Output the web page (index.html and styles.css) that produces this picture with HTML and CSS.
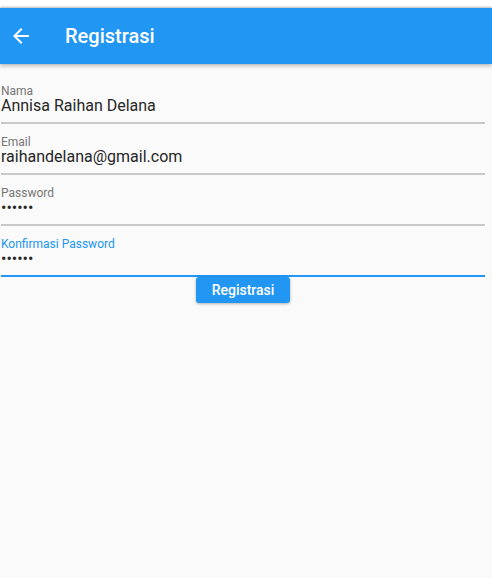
FILE: index.html
```html
<!DOCTYPE html>
<html>
<head>
<meta charset="utf-8">
<link rel="stylesheet" href="styles.css">
</head>
<body>
<div class="status"></div>
<header class="appbar">
  <svg class="back" viewBox="0 0 24 24" width="24" height="24"><path d="M20 11H7.83l5.59-5.59L12 4l-8 8 8 8 1.41-1.41L7.83 13H20v-2z" fill="#fff"/></svg>
  <h1 class="title">Registrasi</h1>
</header>
<main class="form">
  <div class="field">
    <div class="label">Nama</div>
    <div class="value">Annisa Raihan Delana</div>
  </div>
  <div class="field">
    <div class="label">Email</div>
    <div class="value">raihandelana@gmail.com</div>
  </div>
  <div class="field">
    <div class="label">Password</div>
    <div class="value dots">••••••</div>
  </div>
  <div class="field focused">
    <div class="label">Konfirmasi Password</div>
    <div class="value dots">••••••</div>
  </div>
  <div class="actions">
    <button class="btn">Registrasi</button>
  </div>
</main>
</body>
</html>
```
FILE: styles.css
```css
html, body {
  margin: 0;
  padding: 0;
}
body {
  width: 492px;
  height: 578px;
  background: #fafafa;
  font-family: Roboto, "Noto Sans", sans-serif;
  overflow: hidden;
}
.status {
  height: 8px;
  background: #ffffff;
}
.appbar {
  position: relative;
  z-index: 1;
  height: 56px;
  background: #2196f3;
  display: flex;
  align-items: center;
  box-shadow: 0 2px 4px rgba(0,0,0,0.25), 0 -1px 2px rgba(0,0,0,0.25);
}
.back {
  margin-left: 9px;
  display: block;
}
.title {
  margin: 0 0 0 32px;
  color: #fff;
  font-size: 20px;
  font-weight: 500;
  line-height: 24px;
}
.form {
  margin-top: 9px;
  width: 486px;
}
.field {
  margin-left: 1px;
  width: 484px;
  padding-top: 11px;
  padding-bottom: 8px;
  border-bottom: 2px solid #c8c8c8;
}
.label {
  font-size: 12px;
  line-height: 14px;
  color: #757575;
}
.value {
  font-size: 16px;
  line-height: 16px;
  color: #262626;
}
.focused {
  border-bottom-color: #2196f3;
}
.focused .label {
  color: #2196f3;
}
.actions {
  display: flex;
  justify-content: center;
}
.btn {
  width: 94px;
  height: 26px;
  border: none;
  border-radius: 3px;
  background: #2196f3;
  color: #fff;
  font-family: Roboto, "Noto Sans", sans-serif;
  font-size: 14px;
  font-weight: 500;
  padding: 0;
  box-shadow: 0 1px 3px rgba(0,0,0,0.3);
}
```
